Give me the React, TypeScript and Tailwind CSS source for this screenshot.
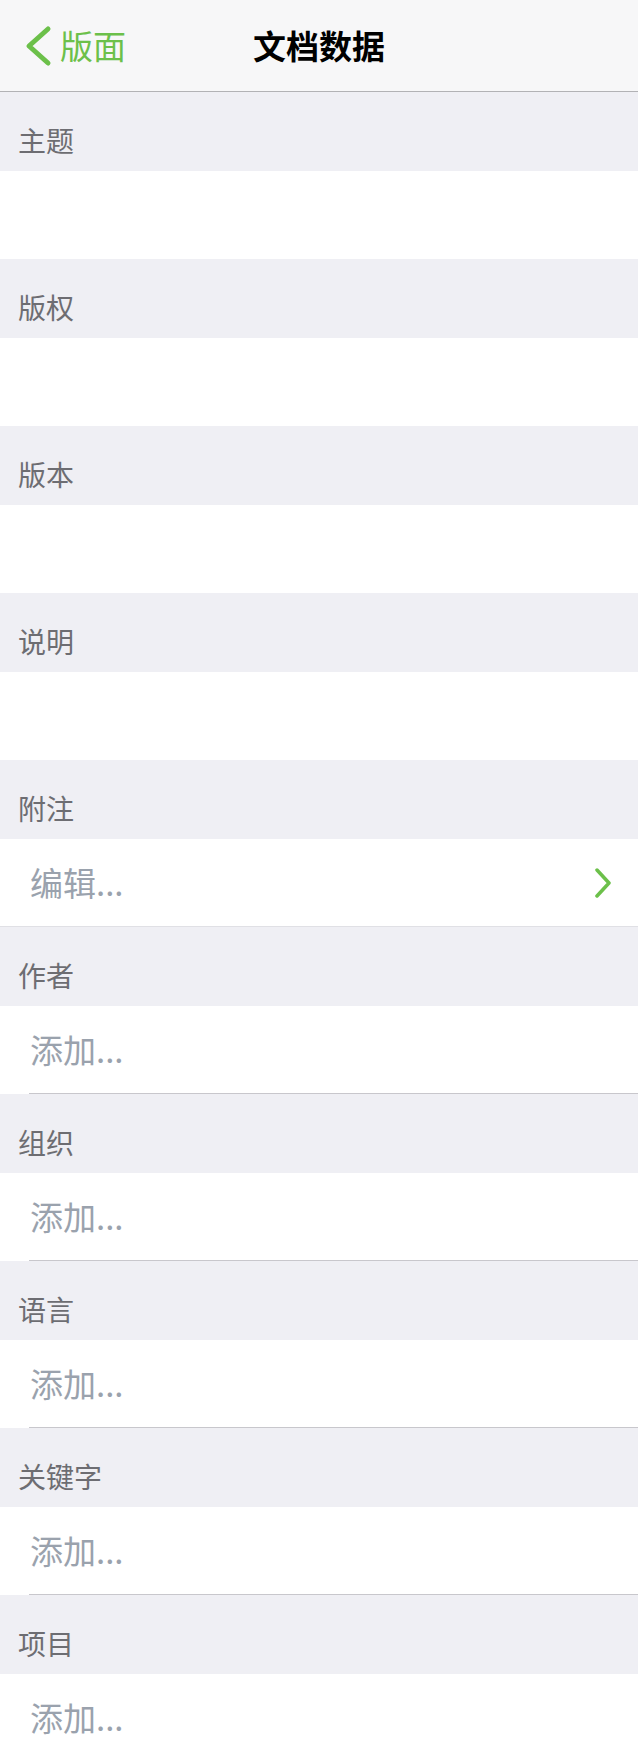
import React from 'react';

type Field = {
    label: string;
    kind: 'blank' | 'edit' | 'add';
};

const fields: Field[] = [
    { label: '主题', kind: 'blank' },
    { label: '版权', kind: 'blank' },
    { label: '版本', kind: 'blank' },
    { label: '说明', kind: 'blank' },
    { label: '附注', kind: 'edit' },
    { label: '作者', kind: 'add' },
    { label: '组织', kind: 'add' },
    { label: '语言', kind: 'add' },
    { label: '关键字', kind: 'add' },
    { label: '项目', kind: 'add' },
];

const font = { fontFamily: '"Noto Sans CJK SC", "Noto Sans", sans-serif' };

const NavBar: React.FC = () => (
    <div className="relative flex h-[92px] items-center justify-center border-b border-[#b2b2b5] bg-[#f7f7f8]">
        {/* Back button */}
        <button className="absolute left-0 top-0 flex h-[91px] items-center pl-[24px] text-[#6cc04a]">
            <svg width="28" height="42" viewBox="0 0 28 42" className="mr-[8px]">
                <polyline
                    points="24,4 5,21 24,38"
                    fill="none"
                    stroke="currentColor"
                    strokeWidth="5"
                    strokeLinecap="round"
                    strokeLinejoin="round"
                />
            </svg>
            <span className="text-[33px] leading-none">版面</span>
        </button>
        <h1 className="text-[33px] font-semibold leading-none text-black">文档数据</h1>
    </div>
);

const SectionHeader: React.FC<{ label: string }> = ({ label }) => (
    <div className="h-[79px] bg-[#efeff4] pl-[18px] pt-[34px] text-[28px] leading-[28px] text-[#6d6d72]">
        {label}
    </div>
);

const Row: React.FC<{ kind: Field['kind'] }> = ({ kind }) => {
    if (kind === 'blank') return <div className="h-[88px] bg-white" />;

    if (kind === 'edit') {
        return (
            <div className="flex h-[88px] items-center justify-between border-b border-[#e0e0e5] bg-white pl-[30px] pr-[26px]">
                <span className="text-[33px] leading-none text-[#9aa2ad]">编辑...</span>
                <svg width="18" height="30" viewBox="0 0 18 30" className="text-[#6cc04a]">
                    <polyline
                        points="3,2 15,15 3,28"
                        fill="none"
                        stroke="currentColor"
                        strokeWidth="3.5"
                        strokeLinecap="round"
                        strokeLinejoin="round"
                    />
                </svg>
            </div>
        );
    }

    return (
        <div className="bg-white pl-[29px]">
            <div className="flex h-[88px] items-center border-b border-[#c8c7cc] pl-[1px]">
                <span className="text-[33px] leading-none text-[#9aa2ad]">添加...</span>
            </div>
        </div>
    );
};

export default function App() {
    return (
        <div className="min-h-screen w-full bg-[#efeff4]" style={font}>
            <NavBar />
            {fields.map(f => (
                <section key={f.label}>
                    <SectionHeader label={f.label} />
                    <Row kind={f.kind} />
                </section>
            ))}
        </div>
    );
}
